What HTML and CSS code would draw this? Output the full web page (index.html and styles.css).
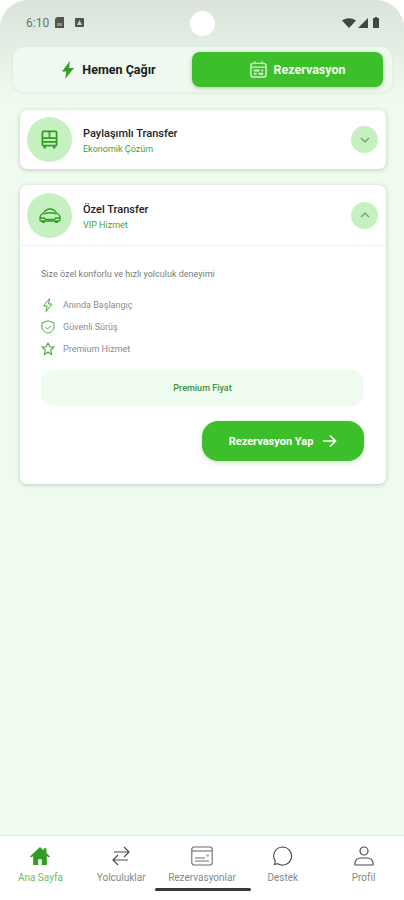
FILE: index.html
```html
<!DOCTYPE html>
<html lang="tr">
<head>
  <meta charset="UTF-8" />
  <meta name="viewport" content="width=device-width, initial-scale=1.0"/>
  <title>Transfer</title>
  <link rel="stylesheet" href="styles.css">
</head>
<body>
  <div class="screen">
    <div class="camera"></div>

    <!-- status bar -->
    <div class="status">
      <div class="status-left">
        <span class="clock">6:10</span>
        <svg width="9" height="11" viewBox="0 0 9 11"><path d="M2 0h7v11H0V2z" fill="#4d554f"/><path d="M2 6h5v3H2z" fill="#8b938c"/></svg>
        <svg class="status-gap" width="9" height="9" viewBox="0 0 9 9"><rect width="9" height="9" rx="1" fill="#4d554f"/><path d="M2 7l2.500-5L7 7z" fill="#c9d3ca"/></svg>
      </div>
      <div class="status-right">
        <svg width="14" height="10" viewBox="0 0 14 10"><path d="M0 2.500Q7-2 14 2.500L7 10z" fill="#3f4741"/></svg>
        <svg width="10" height="10" viewBox="0 0 10 10"><path d="M10 0v10H0z" fill="#3f4741"/></svg>
        <svg class="status-gap" width="6" height="11" viewBox="0 0 6 11"><path d="M2 0h2v1h2v10H0V1h2z" fill="#3f4741"/></svg>
      </div>
    </div>

    <!-- tabs -->
    <div class="tabs">
      <div class="tab">
        <svg width="14" height="18" viewBox="0 0 14 18"><path d="M9 0L1 10.500h4.500L4 18l9-11H8z" fill="#2f9e22"/></svg>
        <span>Hemen Çağır</span>
      </div>
      <div class="tab tab-active">
        <svg width="17" height="17" viewBox="0 0 18 18" fill="none" stroke="#d8f3d2" stroke-width="1.500"><rect x="1" y="2.500" width="16" height="14.500" rx="2.500"/><path d="M1 6.500h16M5 .5v3M13 .5v3"/><path d="M4 10h6M12 10h2M4 13.500h3M9 13.500h5" stroke-width="2"/></svg>
        <span>Rezervasyon</span>
      </div>
    </div>

    <div class="content">
      <!-- kapali kart -->
      <div class="card">
        <div class="card-head">
          <div class="icon-circle">
            <svg width="17" height="19" viewBox="0 0 18 20" fill="none" stroke="#2f9e22" stroke-width="1.800"><rect x="1.500" y="1.500" width="15" height="15" rx="1"/><path d="M9 1.500v7M1.500 8.500h15M1.500 12.500h15"/><path d="M4 17v2.500M14 17v2.500" stroke-width="2.500"/></svg>
          </div>
          <div class="card-titles">
            <div class="card-title">Paylaşımlı Transfer</div>
            <div class="card-sub">Ekonomik Çözüm</div>
          </div>
          <div class="chevron">
            <svg width="10" height="6" viewBox="0 0 10 6" fill="none" stroke="#6d9a68" stroke-width="1.200"><path d="M1 1l4 4 4-4"/></svg>
          </div>
        </div>
      </div>

      <!-- acik kart -->
      <div class="card">
        <div class="card-head card-head-open">
          <div class="icon-circle">
            <svg width="22" height="15" viewBox="0 0 22 15" fill="none" stroke="#2f9e22" stroke-width="1.300"><path d="M1 9.500Q1 6.500 4 5.500Q7 1 11 1t7 4.500Q21 6.500 21 9.500V12q0 1-1 1H2q-1 0-1-1z"/><path d="M4.500 6Q11 3.500 17.500 6M1 10h4l2 1.500h8l2-1.500h4"/><path d="M3 14h3M16 14h3" stroke-width="1.800"/></svg>
          </div>
          <div class="card-titles">
            <div class="card-title">Özel Transfer</div>
            <div class="card-sub">VIP Hizmet</div>
          </div>
          <div class="chevron">
            <svg width="10" height="6" viewBox="0 0 10 6" fill="none" stroke="#6d9a68" stroke-width="1.200"><path d="M1 5l4-4 4 4"/></svg>
          </div>
        </div>

        <div class="card-body">
          <p class="desc">Size özel konforlu ve hızlı yolculuk deneyimi</p>

          <ul class="features">
            <li>
              <svg width="14" height="14" viewBox="0 0 14 14" fill="none" stroke="#4aa83f" stroke-width="1"><path d="M8.500 .5L2.500 8h3.500l-1 5.500 6-7.500H7.500z"/></svg>
              Anında Başlangıç
            </li>
            <li>
              <svg width="14" height="14" viewBox="0 0 14 14" fill="none" stroke="#4aa83f" stroke-width="1"><path d="M7 .8l6 2v4.200c0 3-2.500 5-6 6.200C3.500 12 1 10 1 7V2.800z"/><path d="M4.500 7l2 2 3.500-3.500"/></svg>
              Güvenli Sürüş
            </li>
            <li>
              <svg width="14" height="14" viewBox="0 0 14 14" fill="none" stroke="#4aa83f" stroke-width="1.100"><path d="M7 1l1.800 4H13l-3.300 3 1 4.500L7 10.200 3.300 12.500l1-4.500L1 5h4.200z"/></svg>
              Premium Hizmet
            </li>
          </ul>

          <div class="price">Premium Fiyat</div>

          <div class="actions">
            <div class="book-btn">
              <span>Rezervasyon Yap</span>
              <svg width="15" height="14" viewBox="0 0 15 14" fill="none" stroke="#fff" stroke-width="1.700"><path d="M1 7h12.500M8 1.500L13.500 7 8 12.500"/></svg>
            </div>
          </div>
        </div>
      </div>
    </div>

    <!-- alt menu -->
    <nav class="nav">
      <div class="nav-item nav-active">
        <svg width="20" height="20" viewBox="0 0 22 20"><path d="M11 0L0 10.500l1.500 1.200L3.500 10v10h5.500v-6.500h4V20h5.500V10l2 1.700 1.500-1.200-4-3.800V1.500h-3v2.400z" fill="#2f9e22"/></svg>
        <span>Ana Sayfa</span>
      </div>
      <div class="nav-item">
        <svg width="18" height="20" viewBox="0 0 18 20" fill="none" stroke="#4a4f4b" stroke-width="1.200"><path d="M2 6h15M12 1l5 5-5 5M16 14H1M6 9l-5 5 5 5"/></svg>
        <span>Yolculuklar</span>
      </div>
      <div class="nav-item">
        <svg width="22" height="20" viewBox="0 0 22 20" fill="none" stroke="#6a6f6b" stroke-width="1.100"><rect x=".8" y="1" width="20.400" height="18" rx="2.500"/><path d="M.8 5h20.400"/><path d="M4 12h10M15 9.500h3M4 15h14" stroke="#b4b8b5" stroke-width="2"/></svg>
        <span>Rezervasyonlar</span>
      </div>
      <div class="nav-item">
        <svg width="21" height="21" viewBox="0 0 21 21" fill="none" stroke="#4a4f4b" stroke-width="1.200"><path d="M10.500 1a9.500 9.500 0 1 1-5 17.600L2 19.500l1-3.500A9.500 9.500 0 0 1 10.500 1z"/></svg>
        <span>Destek</span>
      </div>
      <div class="nav-item">
        <svg width="20" height="20" viewBox="0 0 20 20" fill="none" stroke="#4a4f4b" stroke-width="1.200"><circle cx="10" cy="5" r="4"/><path d="M1 19v-2c0-3 3-5 5.500-5h7c2.500 0 5.500 2 5.500 5v2z"/></svg>
        <span>Profil</span>
      </div>
      <div class="home-bar"></div>
    </nav>
  </div>
</body>
</html>
```

FILE: styles.css
```css
* {
  box-sizing: border-box;
}

body {
  margin: 0;
  background: #fff;
  font-family: Roboto, "Noto Sans", sans-serif;
  color: #222;
}

.screen {
  position: relative;
  width: 404px;
  height: 900px;
  display: flex;
  flex-direction: column;
  overflow: hidden;
  border-radius: 28px 28px 0 0;
  background: linear-gradient(#d9e3d9 0, #f0fbf0 100px);
}

.camera {
  position: absolute;
  top: 11px;
  left: 190px;
  width: 25px;
  height: 25px;
  border-radius: 50%;
  background: #fff;
}

/* status bar */
.status {
  height: 47px;
  padding: 0 25px 2px 26px;
  display: flex;
  align-items: center;
  justify-content: space-between;
}

.status-left,
.status-right {
  display: flex;
  align-items: center;
  gap: 2px;
}

.status-left {
  gap: 6px;
}

.status-left .status-gap {
  margin-left: 5px;
}

.status-gap {
  margin-left: 3px;
}

.clock {
  font-size: 12px;
  color: #6a726c;
}

/* tabs */
.tabs {
  margin: 0 12px 0 13px;
  height: 45px;
  padding: 5px 9px 5px 0;
  display: flex;
  border-radius: 10px;
  background: #eff9ef;
  box-shadow: 0 1px 3px rgba(120, 150, 120, 0.15);
}

.tab {
  flex: 1;
  padding-left: 12px;
  display: flex;
  align-items: center;
  justify-content: center;
  gap: 7px;
  font-size: 12.500px;
  font-weight: 700;
  color: #1c1c1c;
}

.tab-active {
  flex: none;
  width: 191px;
  padding-left: 21px;
  gap: 6px;
  border-radius: 8px;
  background: #3dbf2b;
  color: #eefbea;
  box-shadow: 0 1px 4px rgba(40, 120, 30, 0.35);
}

/* kartlar */
.content {
  flex: 1;
  padding: 18px 18px 0 20px;
  display: flex;
  flex-direction: column;
  gap: 16px;
}

.card {
  background: #fff;
  border-radius: 7px;
  box-shadow: 0 1px 4px rgba(70, 90, 70, 0.3);
}

.card-head {
  height: 59px;
  padding: 0 8px 0 7px;
  display: flex;
  align-items: center;
}

.card-head-open {
  height: 61px;
  border-bottom: 1px solid #eef2ee;
}

.icon-circle {
  width: 45px;
  height: 45px;
  border-radius: 50%;
  background: #c5f0bf;
  display: flex;
  align-items: center;
  justify-content: center;
}

.card-titles {
  flex: 1;
  margin-left: 11px;
  padding-top: 2px;
}

.card-title {
  font-size: 11px;
  font-weight: 500;
  color: #222;
}

.card-sub {
  margin-top: 4px;
  font-size: 9px;
  color: #3fa335;
}

.chevron {
  width: 27px;
  height: 27px;
  border-radius: 50%;
  background: #c5f0bf;
  display: flex;
  align-items: center;
  justify-content: center;
}

.card-body {
  padding: 23px 22px 23px 21px;
}

.desc {
  margin: 0;
  font-size: 9px;
  color: #7a7d7a;
}

.features {
  list-style: none;
  margin: 19px 0 0;
  padding: 0;
  display: flex;
  flex-direction: column;
  gap: 8px;
}

.features li {
  height: 14px;
  display: flex;
  align-items: center;
  gap: 8px;
  font-size: 9px;
  color: #8a8d8a;
}

.price {
  margin-top: 14px;
  height: 36px;
  border-radius: 12px;
  background: #f0fbf0;
  display: flex;
  align-items: center;
  justify-content: center;
  font-size: 9px;
  font-weight: 500;
  color: #3f8f37;
}

.actions {
  margin-top: 15px;
  display: flex;
  justify-content: flex-end;
}

.book-btn {
  width: 162px;
  height: 40px;
  border-radius: 16px;
  background: #3dbf2b;
  box-shadow: 0 2px 5px rgba(60, 150, 50, 0.25);
  display: flex;
  align-items: center;
  justify-content: center;
  gap: 9px;
  font-size: 11px;
  font-weight: 700;
  color: #fff;
}

/* alt menu */
.nav {
  position: relative;
  height: 65px;
  padding-top: 10px;
  display: flex;
  background: #fff;
  border-top: 1px solid #dfe8df;
}

.nav-item {
  flex: 1;
  display: flex;
  flex-direction: column;
  align-items: center;
  gap: 6px;
  font-size: 10px;
  color: #858985;
}

.nav-item svg {
  height: 20px;
}

.nav-active {
  color: #6cc062;
}

.home-bar {
  position: absolute;
  left: 155px;
  bottom: 9px;
  width: 96px;
  height: 3px;
  border-radius: 2px;
  background: #3a3a3a;
}
```
